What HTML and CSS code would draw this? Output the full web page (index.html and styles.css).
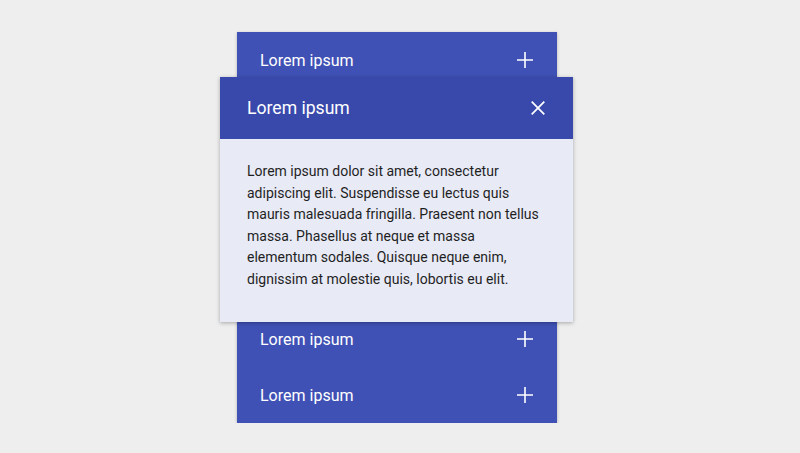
FILE: index.html
```html
<!DOCTYPE html>
<html>
<head>
<meta charset="utf-8">
<link rel="stylesheet" href="styles.css">
</head>
<body>
<div class="accordion">
  <div class="item">
    <div class="head"><span class="title">Lorem ipsum</span>
      <svg class="icon" viewBox="0 0 16 16"><path d="M8 0V16M0 8H16" stroke="#fff" stroke-width="1.6" fill="none"/></svg>
    </div>
  </div>
  <div class="item open">
    <div class="head"><span class="title">Lorem ipsum</span>
      <svg class="icon" viewBox="0 0 14 14"><path d="M0.7 0.7L13.3 13.3M13.3 0.7L0.7 13.3" stroke="#fff" stroke-width="1.7" fill="none"/></svg>
    </div>
    <div class="body">Lorem ipsum dolor sit amet, consectetur adipiscing elit. Suspendisse eu lectus quis mauris malesuada fringilla. Praesent non tellus massa. Phasellus at neque et massa elementum sodales. Quisque neque enim, dignissim at molestie quis, lobortis eu elit.</div>
  </div>
  <div class="item">
    <div class="head"><span class="title">Lorem ipsum</span>
      <svg class="icon" viewBox="0 0 16 16"><path d="M8 0V16M0 8H16" stroke="#fff" stroke-width="1.6" fill="none"/></svg>
    </div>
  </div>
  <div class="item">
    <div class="head"><span class="title">Lorem ipsum</span>
      <svg class="icon" viewBox="0 0 16 16"><path d="M8 0V16M0 8H16" stroke="#fff" stroke-width="1.6" fill="none"/></svg>
    </div>
  </div>
</div>
</body>
</html>
```
FILE: styles.css
```css
html, body {
  margin: 0;
  padding: 0;
  background: #eeeeee;
  font-family: Roboto, "Noto Sans", sans-serif;
}
.accordion {
  width: 320px;
  margin: 32px 0 0 237px;
  display: flex;
  flex-direction: column;
  background: #3f51b5;
  box-shadow: 0 1px 3px rgba(0,0,0,0.25);
}
.item {
  background: #3f51b5;
}
.head {
  height: 56px;
  display: flex;
  align-items: center;
  justify-content: space-between;
  padding: 0 24px 0 23px;
  color: #fff;
  font-size: 16px;
}
.icon {
  width: 16px;
  height: 16px;
  display: block;
  flex: none;
}
.open {
  position: relative;
  z-index: 1;
  margin: -11px -16px -11px -17px;
  height: 245px;
  display: flex;
  flex-direction: column;
  box-shadow: 0 1px 4px rgba(0,0,0,0.3);
}
.open .head {
  height: 62px;
  flex: none;
  background: #3949ab;
  font-size: 17.6px;
  padding: 0 28px 0 27px;
}
.open .icon {
  width: 14px;
  height: 14px;
}
.body {
  flex: 1;
  background: #e8eaf6;
  color: #1f1f1f;
  font-size: 14px;
  line-height: 21.5px;
  padding: 22px 27px 0 27px;
}
```
